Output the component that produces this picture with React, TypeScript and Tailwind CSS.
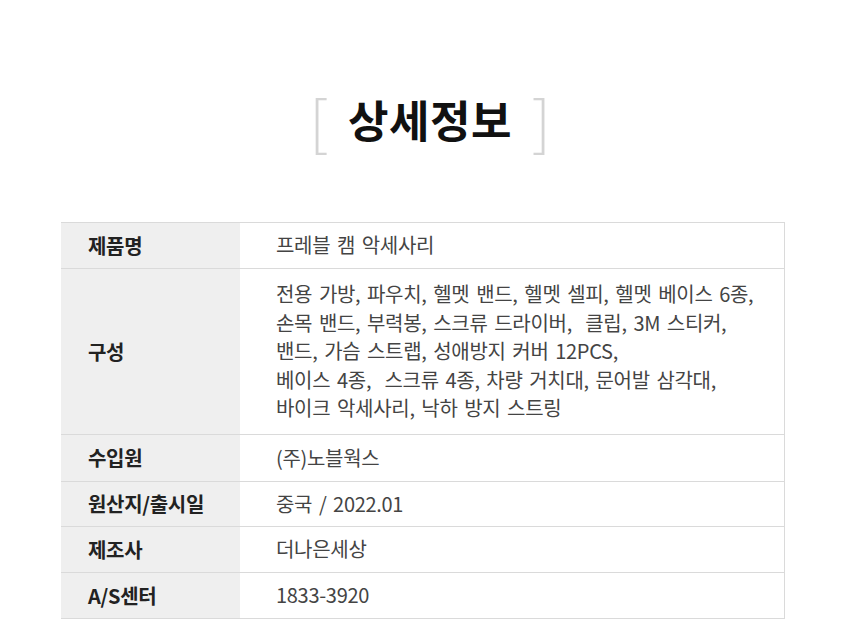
const rows: { label: string; value: string[]; h: string }[] = [
  { label: "제품명", value: ["프레블 캠 악세사리"], h: "h-[46px]" },
  {
    label: "구성",
    value: [
      "전용 가방, 파우치, 헬멧 밴드, 헬멧 셀피, 헬멧 베이스 6종,",
      "손목 밴드, 부력봉, 스크류 드라이버,  클립, 3M 스티커,",
      "밴드, 가슴 스트랩, 성애방지 커버 12PCS,",
      "베이스 4종,  스크류 4종, 차량 거치대, 문어발 삼각대,",
      "바이크 악세사리, 낙하 방지 스트링",
    ],
    h: "h-[166px]",
  },
  { label: "수입원", value: ["(주)노블웍스"], h: "h-[47px]" },
  { label: "원산지/출시일", value: ["중국 / 2022.01"], h: "h-[45px]" },
  { label: "제조사", value: ["더나은세상"], h: "h-[46px]" },
  { label: "A/S센터", value: ["1833-3920"], h: "h-[46px]" },
];

export default function App() {
  return (
    <div
      className="w-[860px] h-[622px] bg-white overflow-hidden"
      style={{ fontFamily: '"Noto Sans CJK KR", "Noto Sans", sans-serif' }}
    >
      {/* Title */}
      <div className="pt-[83px] h-[222px] flex justify-center">
        <div className="flex items-start gap-[20px] h-[72px]">
          <span className="text-[60px] leading-[72px] font-light text-[#d4d4d4]">[</span>
          <h1 className="text-[44px] leading-[72px] font-bold text-[#111] tracking-[0.5px]">상세정보</h1>
          <span className="text-[60px] leading-[72px] font-light text-[#d4d4d4]">]</span>
        </div>
      </div>

      {/* Table */}
      <div className="ml-[61px] w-[724px] border-t border-r border-[#dadada]">
        {rows.map((r) => (
          <div key={r.label} className={`flex border-b border-[#dadada] ${r.h}`}>
            <div className="w-[179px] shrink-0 bg-[#efefef] flex items-center pl-[27px] text-[20px] font-bold text-[#222] tracking-[-0.3px]">
              {r.label}
            </div>
            <div className="flex-1 flex flex-col justify-center pl-[36px] text-[20px] leading-[28.5px] text-[#444] tracking-[-0.3px] [word-spacing:2.5px]">
              {r.value.map((line, i) => (
                <p key={i} className="whitespace-pre">{line}</p>
              ))}
            </div>
          </div>
        ))}
      </div>
    </div>
  );
}
